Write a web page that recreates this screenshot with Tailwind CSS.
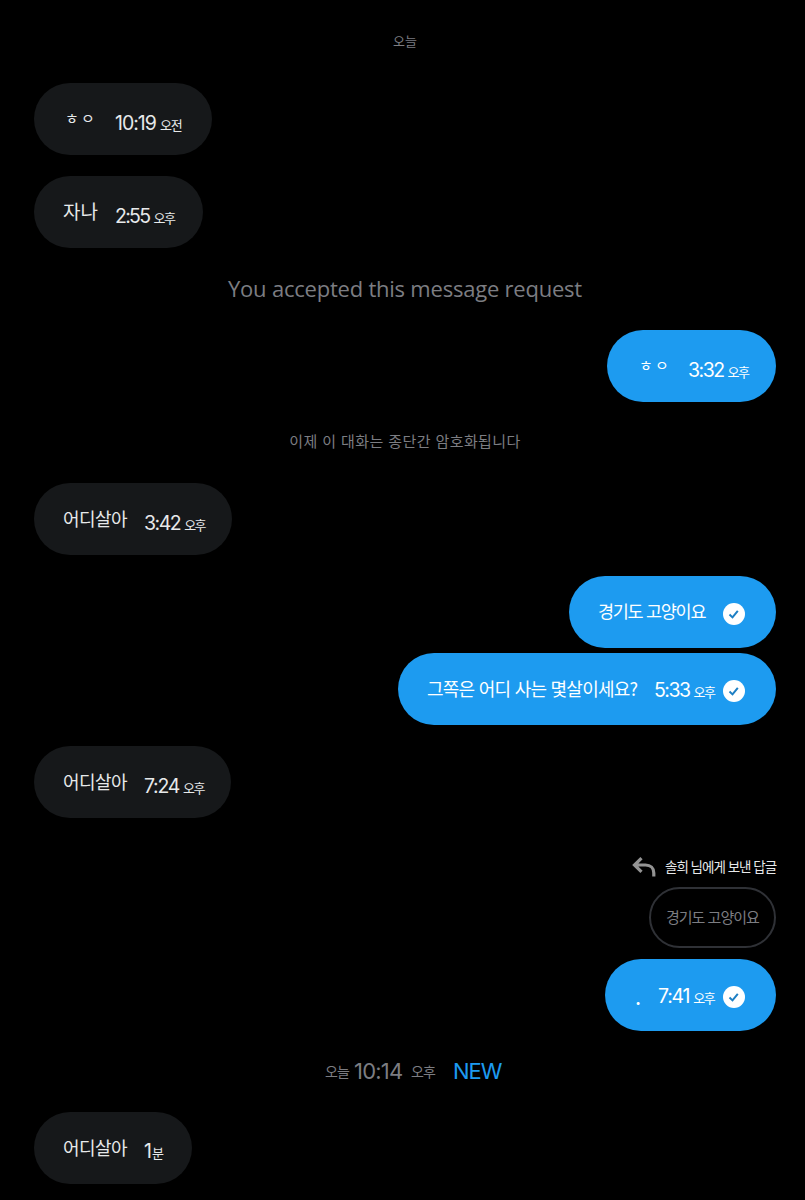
<!DOCTYPE html>
<html lang="ko">
<head>
    <meta charset="UTF-8">
    <meta name="viewport" content="width=device-width, initial-scale=1.0">
    <title>Messages</title>
    <script src="https://cdn.jsdelivr.net/npm/@tailwindcss/browser@4"></script>
</head>
<body class="bg-black">
    <main class="flex flex-col w-full h-[1200px] overflow-hidden bg-black pl-[34px] pr-[29px] pt-[29px] whitespace-nowrap font-['Noto_Sans_CJK_KR',sans-serif] text-[#e7e9ea]">
        <div class="self-center h-6 leading-6 text-[13px] text-[#7c7d82]">오늘</div>

        <!-- received -->
        <div class="self-start flex items-center w-[178px] h-[72px] mt-[30px] pl-[29px] rounded-full bg-[#16181a]">
            <p class="w-[52px] pl-[2px] pb-[2px] text-[15px] leading-6 tracking-[-1px]">ㅎ ㅇ</p>
            <div class="flex items-baseline gap-1 pt-[9px] leading-6">
                <span class="font-['Inter',sans-serif] text-[19.5px] tracking-[-1px]">10:19</span>
                <span class="text-[13px] tracking-[-1px]">오전</span>
            </div>
        </div>

        <div class="self-start flex items-center w-[169px] h-[72px] mt-[21px] pl-[29px] rounded-full bg-[#16181a]">
            <p class="w-[52px] pb-[2px] text-[19px] leading-6">자나</p>
            <div class="flex items-baseline gap-1 pt-[9px] leading-6">
                <span class="font-['Inter',sans-serif] text-[19.5px] tracking-[-1.7px]">2:55</span>
                <span class="text-[13px] tracking-[-1.5px]">오후</span>
            </div>
        </div>

        <div class="self-center h-8 leading-8 mt-6 mb-px font-['Open_Sans',sans-serif] text-[22px] tracking-[-0.22px] text-[#7c7d82]">You accepted this message request</div>

        <!-- sent -->
        <div class="self-end flex items-center w-[169px] h-[72px] mt-[25px] pl-[30px] rounded-full bg-[#1d9bf0] text-white">
            <p class="w-[51px] pl-[2px] pb-[2px] text-[15px] leading-6 tracking-[-1px]">ㅎ ㅇ</p>
            <div class="flex items-baseline gap-1 pt-[9px] leading-6">
                <span class="font-['Inter',sans-serif] text-[19.5px] tracking-[-1.5px]">3:32</span>
                <span class="text-[13px] tracking-[-1.5px]">오후</span>
            </div>
        </div>

        <div class="self-center h-6 leading-6 mt-[27px] text-[15px] tracking-[0.4px] text-[#7c7d82]">이제 이 대화는 종단간 암호화됩니다</div>

        <div class="self-start flex items-center w-[198px] h-[72px] mt-[30px] pl-[29px] rounded-full bg-[#16181a]">
            <p class="w-[81px] pb-[3px] text-[18px] leading-6 tracking-[-0.6px]">어디살아</p>
            <div class="flex items-baseline gap-1 pt-[9px] leading-6">
                <span class="font-['Inter',sans-serif] text-[19.5px] tracking-[-1.5px]">3:42</span>
                <span class="text-[13px] tracking-[-1.5px]">오후</span>
            </div>
        </div>

        <div class="self-end flex items-center w-[207px] h-[72px] mt-[21px] pl-[29px] rounded-full bg-[#1d9bf0] text-white">
            <p class="w-[125px] pb-[3px] text-[17.5px] leading-6 tracking-[-1.3px]">경기도 고양이요</p>
            <svg class="size-[22px] mt-1" viewBox="0 0 22 22" fill="none">
                <circle cx="11" cy="11" r="11" fill="#fff"/>
                <path d="M6.5 11.6l3 2.8 5.3-6.6" stroke="#1d7fc4" stroke-width="2"/>
            </svg>
        </div>

        <div class="self-end flex items-center w-[378px] h-[72px] mt-[5px] pl-[29px] rounded-full bg-[#1d9bf0] text-white">
            <p class="w-[227px] pb-[3px] text-[18px] leading-6 tracking-[-0.75px]">그쪽은 어디 사는 몇살이세요?</p>
            <div class="flex items-baseline gap-1 w-[69px] pt-[3px] leading-6">
                <span class="font-['Inter',sans-serif] text-[19.5px] tracking-[-1.5px]">5:33</span>
                <span class="text-[13px] tracking-[-1.5px]">오후</span>
            </div>
            <svg class="size-[22px] mt-1" viewBox="0 0 22 22" fill="none">
                <circle cx="11" cy="11" r="11" fill="#fff"/>
                <path d="M6.5 11.6l3 2.8 5.3-6.6" stroke="#1d7fc4" stroke-width="2"/>
            </svg>
        </div>

        <div class="self-start flex items-center w-[197px] h-[72px] mt-[21px] pl-[29px] rounded-full bg-[#16181a]">
            <p class="w-[81px] pb-[3px] text-[18px] leading-6 tracking-[-0.6px]">어디살아</p>
            <div class="flex items-baseline gap-1 pt-[9px] leading-6">
                <span class="font-['Inter',sans-serif] text-[19.5px] tracking-[-1.3px]">7:24</span>
                <span class="text-[13px] tracking-[-1.5px]">오후</span>
            </div>
        </div>

        <!-- reply with quoted message -->
        <div class="self-end flex items-center h-6 mt-9">
            <svg class="w-[24px] h-[20px] mt-[2px] mr-[9px]" viewBox="0 0 24 20" fill="none" stroke="#939393" stroke-width="3.2">
                <path d="M9.5 1.2L2.5 8l7 6.8M2.5 8h11c5 0 8.3 3 8.3 8v3.5"/>
            </svg>
            <p class="w-[111px] pb-px text-[13.5px] leading-6 tracking-[-1px]">솔희 님에게 보낸 답글</p>
        </div>
        <div class="self-end flex items-center w-[127px] h-[61px] mt-[9px] pl-[15px] rounded-full border-2 border-[#2f3136]">
            <p class="pb-[2px] text-[15px] leading-6 tracking-[-1px] text-[#7c7d82]">경기도 고양이요</p>
        </div>
        <div class="self-end flex items-center w-[171px] h-[72px] mt-[11px] pl-[29px] rounded-full bg-[#1d9bf0] text-white">
            <p class="w-[24px] pl-px text-[22px] leading-6">.</p>
            <div class="flex items-baseline gap-1 w-[65px] pt-[3px] leading-6">
                <span class="font-['Inter',sans-serif] text-[19.5px] tracking-[-1.2px]">7:41</span>
                <span class="text-[13px] tracking-[-1.5px]">오후</span>
            </div>
            <svg class="size-[22px] mt-1" viewBox="0 0 22 22" fill="none">
                <circle cx="11" cy="11" r="11" fill="#fff"/>
                <path d="M6.5 11.6l3 2.8 5.3-6.6" stroke="#1d7fc4" stroke-width="2"/>
            </svg>
        </div>

        <div class="flex items-center h-8 leading-8 mt-6 pl-[291px] text-[14px] text-[#7c7d82]">
            <span class="w-[29px] tracking-[-1px]">오늘</span>
            <span class="w-[57px] font-['Inter',sans-serif] text-[22px] tracking-[-0.8px]">10:14</span>
            <span class="w-[42px] tracking-[-1px]">오후</span>
            <span class="font-['Inter',sans-serif] text-[22px] tracking-[-1px] text-[#1d9bf0]">NEW</span>
        </div>

        <div class="self-start flex items-center w-[158px] h-[72px] mt-[25px] pl-[29px] rounded-full bg-[#16181a]">
            <p class="w-[81px] pb-[3px] text-[18px] leading-6 tracking-[-0.6px]">어디살아</p>
            <div class="flex items-baseline pt-2 leading-6">
                <span class="font-['Inter',sans-serif] text-[19.5px]">1</span>
                <span class="text-[13px]">분</span>
            </div>
        </div>
    </main>
</body>
</html>
